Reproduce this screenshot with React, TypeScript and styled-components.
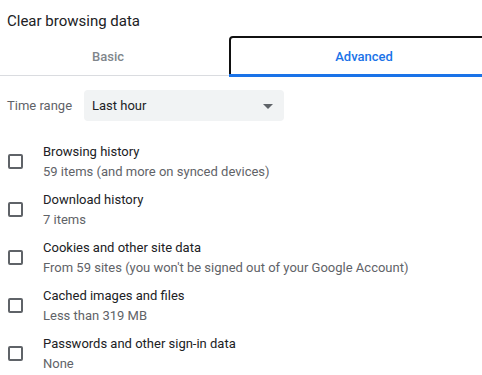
import React from "react";
import styled, { createGlobalStyle } from "styled-components";

const Global = createGlobalStyle`
  html, body { margin: 0; padding: 0; background: #fff; }
  body { font-family: Roboto, "Liberation Sans", Arial, sans-serif; color: #202124; overflow: hidden; }
`;

const Page = styled.div`
  width: 482px;
  height: 375px;
  overflow: hidden;
  display: flex;
  flex-direction: column;
  & > * { flex-shrink: 0; }
`;

const Title = styled.div`
  font-size: 15px;
  line-height: 20px;
  padding: 11px 0 0 7px;
  height: 25px;
  color: #202124;
`;

const TabRow = styled.div`
  display: flex;
  height: 41px;
  position: relative;
  &::after {
    content: "";
    position: absolute;
    left: 0;
    right: 0;
    bottom: 1px;
    height: 1px;
    background: #dadce0;
  }
`;

const Tab = styled.div<{ $active?: boolean; $width: number }>`
  flex: 0 0 ${(p) => p.$width}px;
  box-sizing: border-box;
  display: flex;
  align-items: center;
  justify-content: center;
  font-size: 13px;
  font-weight: 500;
  color: ${(p) => (p.$active ? "#1a73e8" : "#80868b")};
  position: relative;
  z-index: 1;
  ${(p) =>
    p.$active
      ? `
    border: 2px solid #111;
    border-bottom: none;
    border-radius: 4px 4px 0 0;
    padding-bottom: 3px;
    &::after {
      content: "";
      position: absolute;
      left: -2px;
      right: -2px;
      bottom: 0;
      height: 3px;
      background: #1a73e8;
    }
  `
      : `padding-right: 13px;`}
`;

const RangeRow = styled.div`
  display: flex;
  align-items: center;
  margin-top: 13px;
  padding-left: 7px;
  gap: 16px;
`;

const RangeLabel = styled.span`
  font-size: 13px;
  color: #5f6368;
  width: 61px;
  white-space: nowrap;
`;

const Select = styled.div`
  width: 200px;
  height: 31px;
  box-sizing: border-box;
  background: #f1f3f4;
  border-radius: 4px;
  display: flex;
  align-items: center;
  justify-content: space-between;
  padding: 0 11px 0 8px;
  font-size: 13px;
  color: #202124;
`;

const Arrow = styled.span`
  width: 0;
  height: 0;
  border-left: 5px solid transparent;
  border-right: 5px solid transparent;
  border-top: 5px solid #5f6368;
  margin-top: 2px;
`;

const List = styled.div`
  display: flex;
  flex-direction: column;
  margin-top: 16px;
`;

const Item = styled.div`
  display: flex;
  align-items: center;
  height: 48px;
  padding-left: 8px;
  flex-shrink: 0;
`;

const Box = styled.span`
  width: 15px;
  height: 15px;
  box-sizing: border-box;
  border: 2px solid #5f6368;
  border-radius: 2px;
  flex: 0 0 auto;
  margin-right: 20px;
  margin-top: 1px;
`;

const Texts = styled.div`
  display: flex;
  flex-direction: column;
`;

const Label = styled.div`
  font-size: 13px;
  line-height: 20px;
  color: #202124;
`;

const Sub = styled.div`
  font-size: 13px;
  line-height: 19px;
  color: #5f6368;
`;

const items = [
  ["Browsing history", "59 items (and more on synced devices)"],
  ["Download history", "7 items"],
  ["Cookies and other site data", "From 59 sites (you won't be signed out of your Google Account)"],
  ["Cached images and files", "Less than 319 MB"],
  ["Passwords and other sign-in data", "None"],
];

export default function App() {
  return (
    <Page>
      <Global />
      <Title>Clear browsing data</Title>
      <TabRow>
        <Tab $width={229}>Basic</Tab>
        <Tab $width={270} $active>
          Advanced
        </Tab>
      </TabRow>
      <RangeRow>
        <RangeLabel>Time range</RangeLabel>
        <Select>
          <span>Last hour</span>
          <Arrow />
        </Select>
      </RangeRow>
      <List>
        {items.map(([l, s]) => (
          <Item key={l}>
            <Box />
            <Texts>
              <Label>{l}</Label>
              <Sub>{s}</Sub>
            </Texts>
          </Item>
        ))}
      </List>
    </Page>
  );
}
